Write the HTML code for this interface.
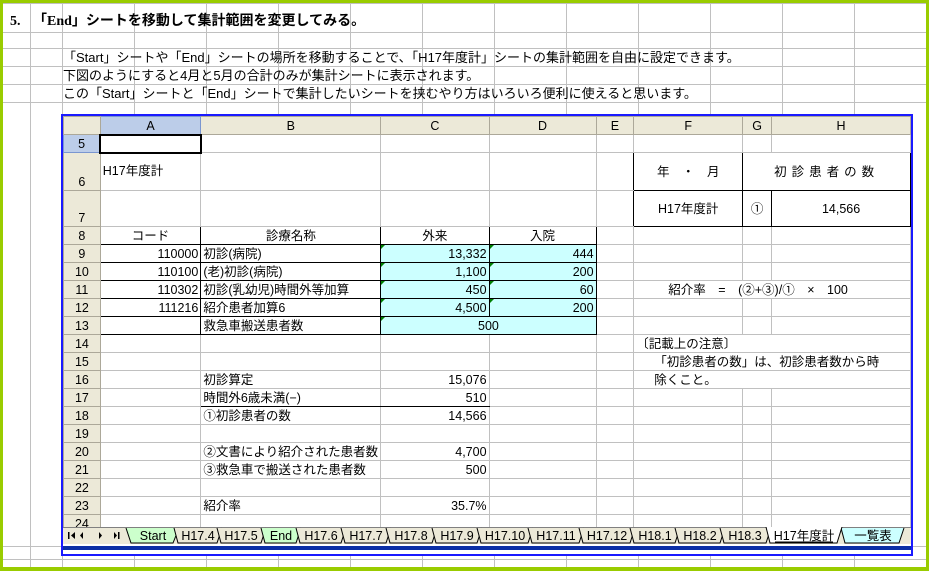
<!DOCTYPE html>
<html><head><meta charset="utf-8"><style>
*{margin:0;padding:0;box-sizing:border-box}
body{width:929px;height:571px;overflow:hidden;background:#fff;position:relative;font-family:"Liberation Sans","Noto Sans CJK JP",sans-serif;color:#000}
#bg{position:absolute;left:0;top:0;width:929px;height:571px;
background-image:repeating-linear-gradient(to right,transparent 0,transparent 62px,#c0c0c0 62px,#c0c0c0 63px,transparent 63px,transparent 72px);}
.vl{position:absolute;top:0;height:571px;width:1px;background:#c0c0c0}
.hl{position:absolute;left:0;width:929px;height:1px;background:#c0c0c0}
.gb{position:absolute;background:#99cc00}
.t{position:absolute;white-space:nowrap;font-size:13px;line-height:16px}
#xl{position:absolute;left:61px;top:114px;width:852px;height:442px;border:2px solid #1a1aff;background:#fff;overflow:hidden}
table{border-collapse:collapse;table-layout:fixed;position:absolute;left:0;top:0;font-size:12.5px}
td{border:1px solid #c0c0c0;height:18px;padding:0 2px;white-space:nowrap;overflow:visible;line-height:16px;vertical-align:bottom}
td.h{background:#ece9d8;border-color:#aca899;text-align:center;color:#000}
td.hs{background:#bccde9;border-color:#7a96d0}
.r{text-align:right}.c{text-align:center}
.b{border:1px solid #000}
.cy{background:#ccffff}
.tri{position:relative}
.tri:before{content:"";position:absolute;left:0;top:0;border-top:4px solid #008000;border-right:4px solid transparent}
</style></head><body>
<div id="bg"></div>
<div class="hl" style="top:3px"></div><div class="hl" style="top:32px"></div>
<div class="hl" style="top:48px"></div><div class="hl" style="top:66px"></div><div class="hl" style="top:84px"></div><div class="hl" style="top:102px"></div>
<div class="hl" style="top:546px"></div><div class="hl" style="top:559px"></div>
<div class="vl" style="left:30px"></div>
<div class="gb" style="left:0;top:0;width:929px;height:3px"></div>
<div class="gb" style="left:0;top:0;width:3px;height:571px"></div>
<div class="gb" style="left:926px;top:0;width:3px;height:571px"></div>
<div class="gb" style="left:0;top:567px;width:929px;height:4px"></div>

<div class="t" style="left:10px;top:14px;font-weight:bold;font-family:'Liberation Serif','Noto Sans CJK JP',serif;font-size:14px">5.</div>
<div class="t" style="left:33px;top:14px;font-weight:bold;font-family:'Liberation Serif','Noto Sans CJK JP',serif;font-size:14px">「End」シートを移動して集計範囲を変更してみる。</div>
<div class="t" style="left:63px;top:50px">「Start」シートや「End」シートの場所を移動することで、「H17年度計」シートの集計範囲を自由に設定できます。</div>
<div class="t" style="left:63px;top:68px">下図のようにすると4月と5月の合計のみが集計シートに表示されます。</div>
<div class="t" style="left:63px;top:86px">この「Start」シートと「End」シートで集計したいシートを挟むやり方はいろいろ便利に使えると思います。</div>

<div id="xl">
<table>
<colgroup><col style="width:37px"><col style="width:101px"><col style="width:180px"><col style="width:109px"><col style="width:108px"><col style="width:38px"><col style="width:109px"><col style="width:29px"><col style="width:139px"></colgroup>
<tr style="height:17px"><td class="h" style="height:17px"></td><td class="h hs">A</td><td class="h">B</td><td class="h">C</td><td class="h">D</td><td class="h">E</td><td class="h">F</td><td class="h">G</td><td class="h">H</td></tr>
<tr><td class="h hs">5</td><td style="border:2px solid #000"></td><td></td><td></td><td></td><td></td><td></td><td></td><td></td></tr>
<tr style="height:38px"><td class="h" style="height:38px">6</td><td style="vertical-align:middle;padding-bottom:2px">H17年度計</td><td></td><td></td><td style="border-right:1px solid #c0c0c0"></td><td style="border-right:1px solid #000"></td><td class="b c" style="vertical-align:middle">年　・　月</td><td colspan="2" class="b c" style="vertical-align:middle;letter-spacing:5px">初診患者の数</td></tr>
<tr style="height:36px"><td class="h" style="height:36px">7</td><td></td><td></td><td></td><td></td><td style="border-right:1px solid #000"></td><td class="b c" style="vertical-align:middle">H17年度計</td><td class="b c" style="vertical-align:middle">①</td><td class="b c" style="vertical-align:middle;border-left:1px solid #c0c0c0">14,566</td></tr>
<tr><td class="h">8</td><td class="b c">コード</td><td class="b c">診療名称</td><td class="b c">外来</td><td class="b c">入院</td><td></td><td></td><td></td><td></td></tr>
<tr><td class="h">9</td><td class="b r">110000</td><td class="b">初診(病院)</td><td class="b r cy tri">13,332</td><td class="b r cy tri">444</td><td></td><td></td><td></td><td></td></tr>
<tr><td class="h">10</td><td class="b r">110100</td><td class="b">(老)初診(病院)</td><td class="b r cy tri">1,100</td><td class="b r cy tri">200</td><td></td><td></td><td></td><td></td></tr>
<tr><td class="h">11</td><td class="b r">110302</td><td class="b">初診(乳幼児)時間外等加算</td><td class="b r cy tri">450</td><td class="b r cy tri">60</td><td></td><td colspan="3" style="padding-left:34px">紹介率　=　(②+③)/①　×　100</td></tr>
<tr><td class="h">12</td><td class="b r">111216</td><td class="b">紹介患者加算6</td><td class="b r cy tri">4,500</td><td class="b r cy tri">200</td><td></td><td></td><td></td><td></td></tr>
<tr><td class="h">13</td><td class="b"></td><td class="b">救急車搬送患者数</td><td colspan="2" class="b c cy tri">500</td><td></td><td></td><td></td><td></td></tr>
<tr><td class="h">14</td><td></td><td></td><td></td><td></td><td></td><td colspan="3">〔記載上の注意〕</td></tr>
<tr><td class="h">15</td><td></td><td></td><td></td><td></td><td></td><td colspan="3" style="padding-left:20px">「初診患者の数」は、初診患者数から時</td></tr>
<tr><td class="h">16</td><td></td><td>初診算定</td><td class="r">15,076</td><td></td><td></td><td colspan="3" style="padding-left:20px">除くこと。</td></tr>
<tr><td class="h">17</td><td></td><td style="border-bottom:1px solid #000">時間外6歳未満(−)</td><td class="r" style="border-bottom:1px solid #000">510</td><td></td><td></td><td></td><td></td><td></td></tr>
<tr><td class="h">18</td><td></td><td>①初診患者の数</td><td class="r">14,566</td><td></td><td></td><td></td><td></td><td></td></tr>
<tr><td class="h">19</td><td></td><td></td><td></td><td></td><td></td><td></td><td></td><td></td></tr>
<tr><td class="h">20</td><td></td><td>②文書により紹介された患者数</td><td class="r">4,700</td><td></td><td></td><td></td><td></td><td></td></tr>
<tr><td class="h">21</td><td></td><td>③救急車で搬送された患者数</td><td class="r">500</td><td></td><td></td><td></td><td></td><td></td></tr>
<tr><td class="h">22</td><td></td><td></td><td></td><td></td><td></td><td></td><td></td><td></td></tr>
<tr><td class="h">23</td><td></td><td>紹介率</td><td class="r">35.7%</td><td></td><td></td><td></td><td></td><td></td></tr>
<tr><td class="h">24</td><td></td><td></td><td></td><td></td><td></td><td></td><td></td><td></td></tr>
</table>
<svg style="position:absolute;left:0;top:411px" width="850" height="29" viewBox="0 0 850 29" font-family="Liberation Sans, Noto Sans CJK JP, sans-serif" font-size="12.5">
<rect x="0" y="0" width="850" height="17" fill="#ece9d8"/>
<line x1="0" y1="0.5" x2="850" y2="0.5" stroke="#808080"/>
<g fill="#000"><rect x="5" y="5" width="1.5" height="7"/><path d="M12 5 L8 8.5 L12 12Z"/><path d="M20 5 L17 8.5 L20 12Z"/><path d="M36 5 L39 8.5 L36 12Z"/><path d="M51 5 L54 8.5 L51 12Z"/><rect x="55" y="5" width="1.5" height="7"/></g>
<g stroke="#000" fill="#ece9d8">
<path d="M63 1 L68 16 L110 16 L116 1" fill="#ccffcc"/>
<path d="M111 1 L115 16 L154 16 L159 1"/>
<path d="M154 1 L158 16 L198 16 L203 1"/>
<path d="M198 1 L202 16 L233 16 L238 1" fill="#ccffcc"/>
<path d="M233 1 L237 16 L278 16 L283 1"/>
<path d="M278 1 L282 16 L323 16 L328 1"/>
<path d="M323 1 L327 16 L369 16 L374 1"/>
<path d="M369 1 L373 16 L414 16 L419 1"/>
<path d="M414 1 L418 16 L465 16 L470 1"/>
<path d="M465 1 L469 16 L516 16 L521 1"/>
<path d="M516 1 L520 16 L567 16 L572 1"/>
<path d="M567 1 L571 16 L612 16 L617 1"/>
<path d="M612 1 L616 16 L657 16 L662 1"/>
<path d="M657 1 L661 16 L703 16 L708 1"/>
<path d="M778 1 L782 16 L836 16 L841 1" fill="#ccffff"/>
<path d="M703 0 L707 16 L774 16 L779 0" fill="#fff"/>
</g>
<g text-anchor="middle">
<text x="90" y="13">Start</text><text x="135" y="13">H17.4</text><text x="178" y="13">H17.5</text><text x="218" y="13">End</text><text x="258" y="13">H17.6</text><text x="303" y="13">H17.7</text><text x="348" y="13">H17.8</text><text x="394" y="13">H17.9</text><text x="442" y="13">H17.10</text><text x="493" y="13">H17.11</text><text x="544" y="13">H17.12</text><text x="592" y="13">H18.1</text><text x="637" y="13">H18.2</text><text x="682" y="13">H18.3</text><text x="741" y="13">H17年度計</text><text x="810" y="13">一覧表</text>
</g>
<line x1="712" y1="15" x2="770" y2="15" stroke="#000"/>
<rect x="0" y="19" width="850" height="4" fill="#0a2ea6"/>
</svg>
</div>
</body></html>
